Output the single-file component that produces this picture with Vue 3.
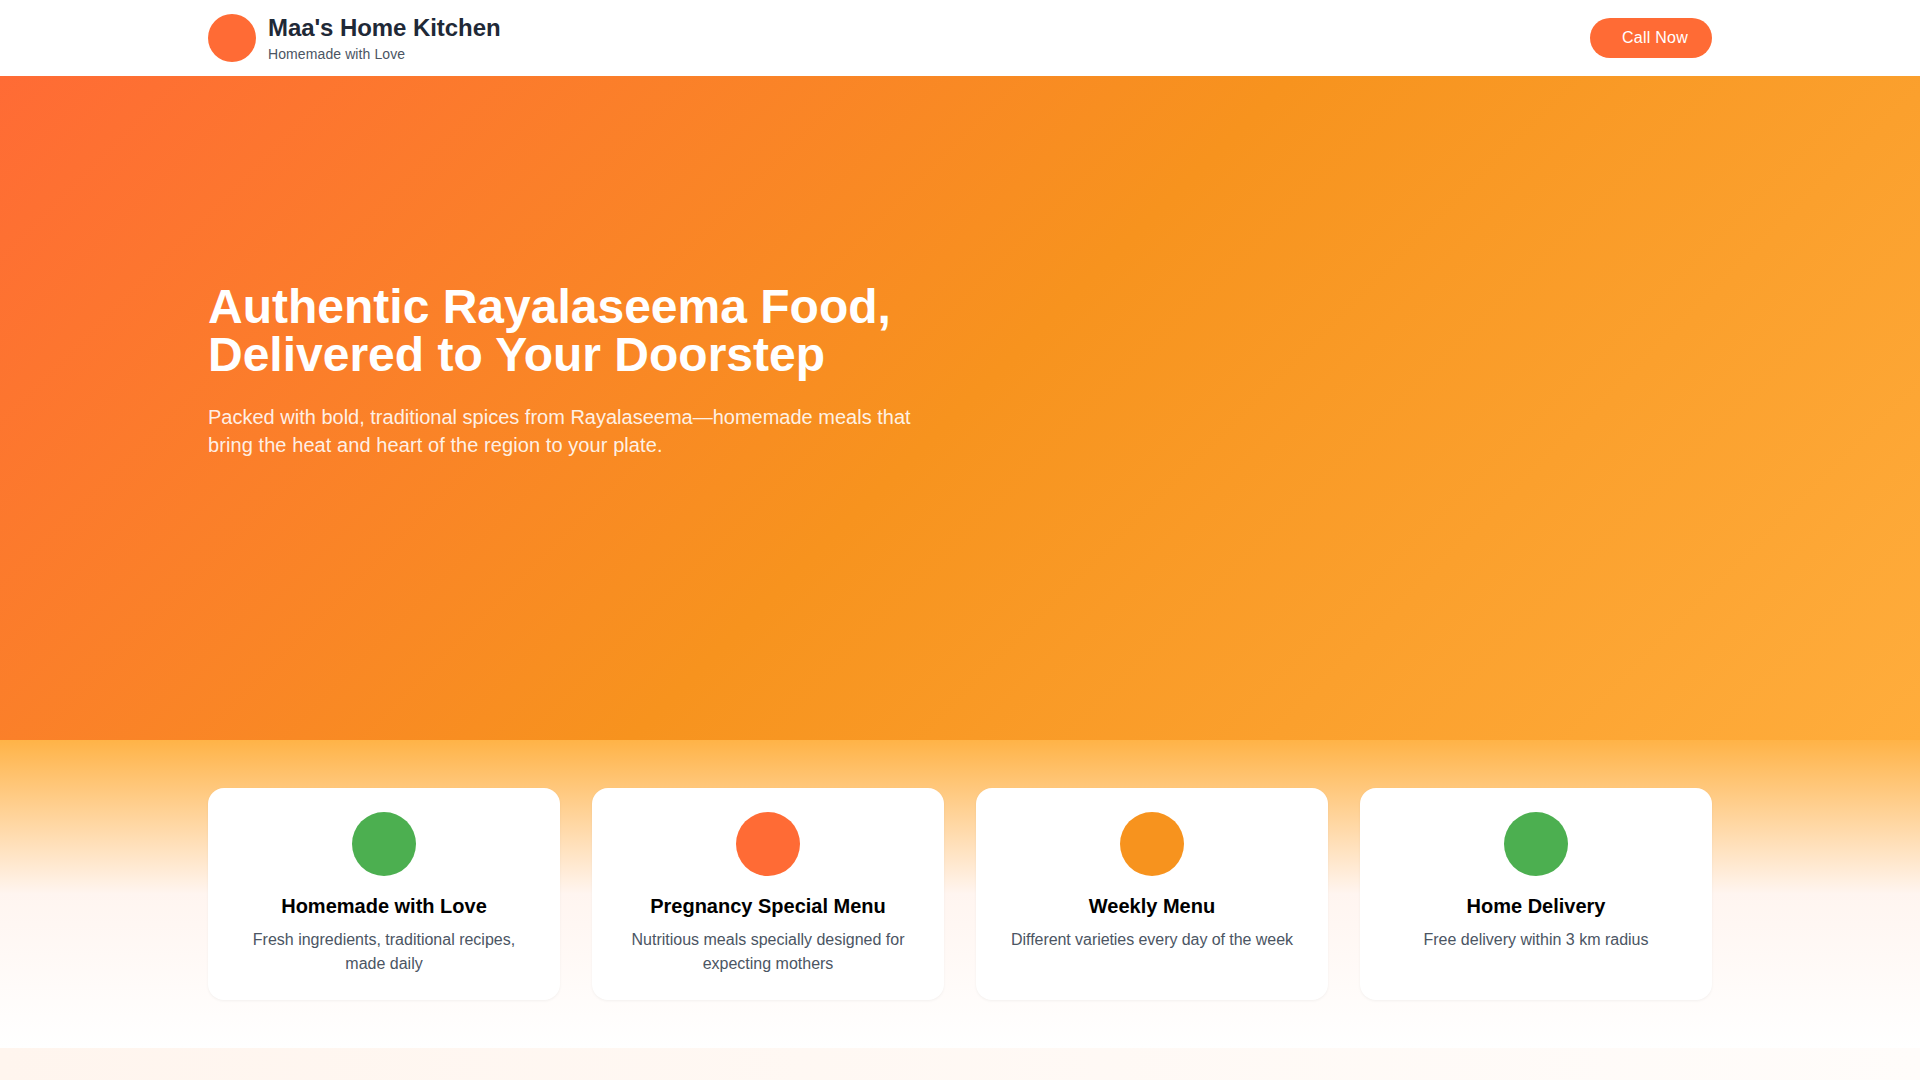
<script setup>
const features = [
  { title: 'Homemade with Love', text: 'Fresh ingredients, traditional recipes, made daily', color: '#4caf50' },
  { title: 'Pregnancy Special Menu', text: 'Nutritious meals specially designed for expecting mothers', color: '#ff6b35' },
  { title: 'Weekly Menu', text: 'Different varieties every day of the week', color: '#f7931e', tight: true },
  { title: 'Home Delivery', text: 'Free delivery within 3 km radius', color: '#4caf50' }
]
</script>

<template>
  <div class="page">
    <header class="header">
      <div class="container headerRow">
        <div class="brand">
          <div class="logo"></div>
          <div>
            <div class="brandName">Maa's Home Kitchen</div>
            <div class="brandTag">Homemade with Love</div>
          </div>
        </div>
        <a class="callBtn">Call Now</a>
      </div>
    </header>

    <section class="hero">
      <div class="container">
        <div class="heroText">
          <h1>Authentic Rayalaseema Food, Delivered to Your Doorstep</h1>
          <p>Packed with bold, traditional spices from Rayalaseema—homemade meals that <span class="wide">bring the heat and heart of the region to your plate.</span></p>
        </div>
      </div>
    </section>

    <section class="features">
      <div class="container grid">
        <div v-for="item in features" :key="item.title" class="card">
          <div class="icon" :style="{ background: item.color }"></div>
          <h3>{{ item.title }}</h3>
          <p :class="{ tight: item.tight }">{{ item.text }}</p>
        </div>
      </div>
    </section>

    <section class="next"></section>
  </div>
</template>

<style>
html, body {
  margin: 0;
  overflow: hidden;
}
</style>

<style scoped>
.page {
  height: 1080px;
  overflow: hidden;
  font-family: "Liberation Sans", Arial, sans-serif;
}

.container {
  width: 1504px;
  margin: 0 auto;
}

.header {
  height: 76px;
  background: #fff;
  display: flex;
  align-items: center;
}

.headerRow {
  display: flex;
  align-items: center;
  justify-content: space-between;
}

.brand {
  display: flex;
  align-items: center;
  gap: 12px;
}

.logo {
  width: 48px;
  height: 48px;
  border-radius: 50%;
  background: #ff6b35;
}

.brandName {
  font-size: 24px;
  line-height: 32px;
  font-weight: 700;
  letter-spacing: -0.07px;
  color: #1f2937;
}

.brandTag {
  font-size: 14px;
  line-height: 20px;
  letter-spacing: 0.1px;
  color: #4b5563;
}

.callBtn {
  box-sizing: border-box;
  height: 40px;
  padding: 0 24px 0 32px;
  border-radius: 20px;
  background: #ff6b35;
  color: #fff;
  font-size: 16px;
  line-height: 40px;
  letter-spacing: 0.25px;
}

.hero {
  height: 664px;
  display: flex;
  align-items: center;
  background: linear-gradient(135deg, #ff6b35 0%, #f7931e 50%, #ffad3c 100%);
  color: #fff;
}

.heroText {
  width: 752px;
  padding-bottom: 74px;
}

.hero h1 {
  margin: 0 0 24px;
  font-size: 48px;
  line-height: 48px;
  font-weight: 700;
}

.hero p {
  margin: 0;
  font-size: 20px;
  line-height: 28px;
  color: rgba(255, 255, 255, 0.9);
}

.wide {
  letter-spacing: 0.08px;
}

.features {
  box-sizing: border-box;
  height: 308px;
  padding: 48px 0;
  background: linear-gradient(to bottom, #ffb347 0%, #fff5f0 50%, #fff 100%);
}

.grid {
  display: grid;
  grid-template-columns: repeat(4, 1fr);
  gap: 32px;
}

.card {
  box-sizing: border-box;
  height: 212px;
  padding: 24px;
  background: #fff;
  border-radius: 16px;
  text-align: center;
  box-shadow: 0 1px 3px rgba(0, 0, 0, 0.05);
}

.icon {
  width: 64px;
  height: 64px;
  border-radius: 50%;
  margin: 0 auto 16px;
}

.card h3 {
  margin: 0 0 8px;
  font-size: 20px;
  line-height: 28px;
  font-weight: 700;
  color: #000;
}

.card p {
  margin: 0;
  font-size: 16px;
  line-height: 24px;
  color: #4b5563;
}

.card p.tight {
  letter-spacing: -0.06px;
}

.next {
  height: 32px;
  background: linear-gradient(to right, #fff5ee, #fffcfa);
}
</style>
